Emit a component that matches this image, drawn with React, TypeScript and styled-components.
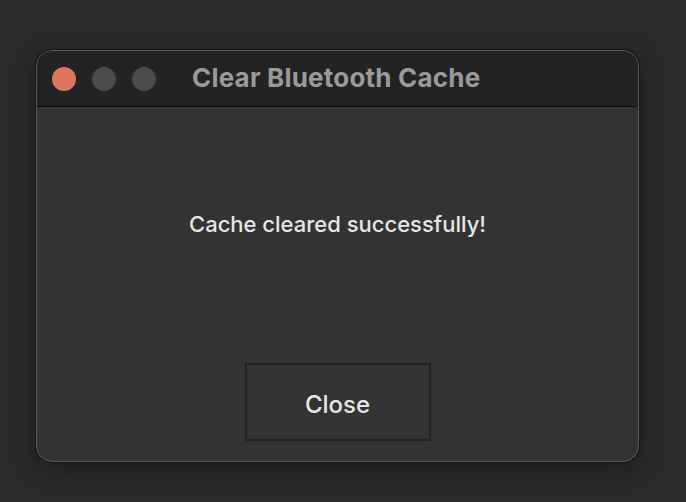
import React from "react";
import styled, { createGlobalStyle } from "styled-components";

const Global = createGlobalStyle`
  html, body { margin: 0; padding: 0; }
  body {
    width: 686px; height: 502px; overflow: hidden;
    background: #2a2a2a;
    font-family: Inter, "Noto Sans", sans-serif;
  }
`;

const Desktop = styled.div`
  width: 686px;
  height: 502px;
  box-sizing: border-box;
  padding: 50px 47px 40px 36px;
  display: flex;
`;

const Window = styled.div`
  flex: 1;
  display: flex;
  flex-direction: column;
  border-radius: 16px;
  border: 1px solid #5c5c5c;
  box-shadow: 0 0 0 1px #151515, 0 6px 24px rgba(0,0,0,0.35);
  overflow: hidden;
  background: #333333;
`;

const TitleBar = styled.div`
  height: 55px;
  flex: none;
  background: #232323;
  border-bottom: 1px solid #111;
  display: flex;
  align-items: center;
  padding-left: 15px;
  gap: 16px;
`;

const Light = styled.span<{ $color: string }>`
  width: 24px;
  height: 24px;
  border-radius: 50%;
  background: ${(p) => p.$color};
  flex: none;
`;

const Title = styled.div`
  margin-left: 20px;
  margin-bottom: 2px;
  color: #9a9a9a;
  font-weight: 700;
  font-size: 26px;
  letter-spacing: 0.2px;
`;

const Body = styled.div`
  flex: 1;
  display: flex;
  flex-direction: column;
  align-items: center;
  padding-top: 104px;
`;

const Message = styled.div`
  color: #e6e6e6;
  font-size: 22px;
  font-weight: 500;
`;

const Button = styled.button`
  margin-top: 126px;
  width: 186px;
  height: 78px;
  padding: 5px 0 0;
  background: #333333;
  border: 2px solid #222;
  color: #e6e6e6;
  font-family: inherit;
  font-size: 24px;
  font-weight: 500;
`;

export default function App() {
  return (
    <>
      <Global />
      <Desktop>
        <Window>
          <TitleBar>
            <Light $color="#df735d" />
            <Light $color="#4b4b4b" />
            <Light $color="#4b4b4b" />
            <Title>Clear Bluetooth Cache</Title>
          </TitleBar>
          <Body>
            <Message>Cache cleared successfully!</Message>
            <Button>Close</Button>
          </Body>
        </Window>
      </Desktop>
    </>
  );
}
